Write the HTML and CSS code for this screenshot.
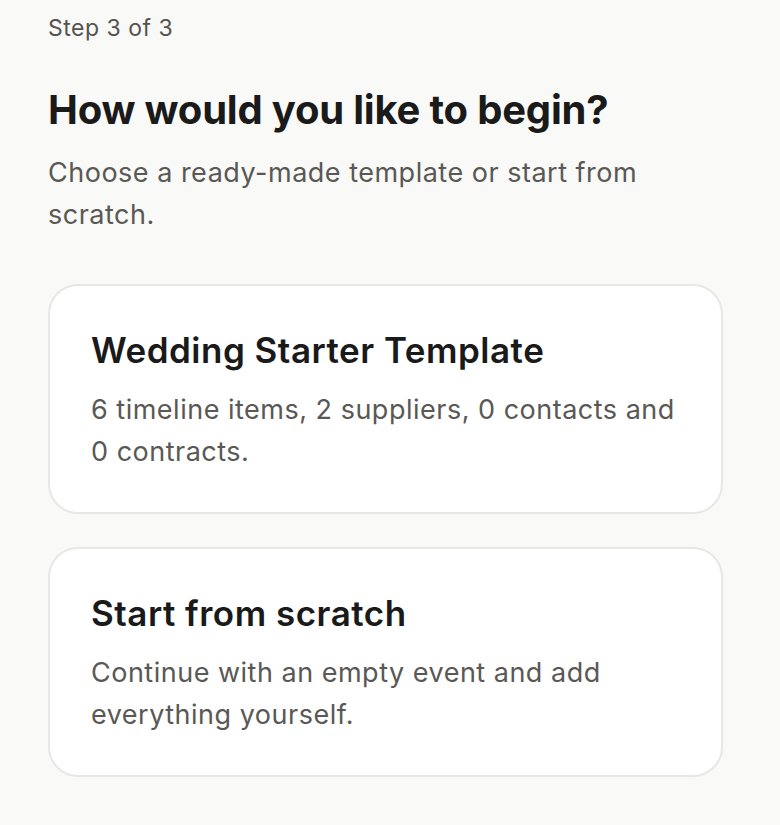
FILE: index.html
```html
<!DOCTYPE html>
<html lang="en">
<head>
<meta charset="utf-8">
<title>Step 3 of 3</title>
<link rel="stylesheet" href="styles.css">
</head>
<body>
<main class="page">
  <p class="step">Step 3 of 3</p>
  <h1 class="title">How would you like to begin?</h1>
  <p class="subtitle">Choose a ready-made template or start from scratch.</p>
  <div class="options">
    <button class="card" type="button">
      <span class="card-title">Wedding Starter Template</span>
      <span class="card-text">6 timeline items, 2 suppliers, 0 contacts and 0 contracts.</span>
    </button>
    <button class="card" type="button">
      <span class="card-title">Start from scratch</span>
      <span class="card-text">Continue with an empty event and add everything yourself.</span>
    </button>
  </div>
</main>
</body>
</html>
```
FILE: styles.css
```css
html, body {
  margin: 0;
  padding: 0;
  background: #f9f9f7;
}
body {
  font-family: Inter, "Noto Sans", sans-serif;
  color: #1a1a1a;
}
.page {
  width: 780px;
  box-sizing: border-box;
  padding: 12px 57px 0 48px;
}
.step {
  margin: 0;
  font-size: 23px;
  line-height: 32px;
  letter-spacing: 0.5px;
  color: #555350;
  font-weight: 400;
}
.title {
  margin: 42px 0 0;
  font-size: 40px;
  line-height: 48px;
  font-weight: 700;
  letter-spacing: -0.2px;
  color: #1a1a1a;
}
.subtitle {
  margin: 18px 0 0;
  font-size: 27px;
  line-height: 42px;
  letter-spacing: 0.5px;
  color: #5a5855;
  max-width: 620px;
}
.options {
  display: flex;
  flex-direction: column;
  gap: 33px;
  margin-top: 48px;
}
.card {
  display: flex;
  flex-direction: column;
  align-items: flex-start;
  text-align: left;
  background: #ffffff;
  border: 2px solid #e8e7e4;
  border-radius: 30px;
  padding: 40px 41px 39px;
  font-family: inherit;
  box-sizing: border-box;
  cursor: pointer;
}
.card-title {
  font-size: 35px;
  line-height: 48px;
  font-weight: 600;
  letter-spacing: 0.5px;
  color: #1a1a1a;
}
.card-text {
  margin-top: 15px;
  font-size: 27px;
  line-height: 42px;
  letter-spacing: 0.5px;
  color: #5a5855;
}
```
